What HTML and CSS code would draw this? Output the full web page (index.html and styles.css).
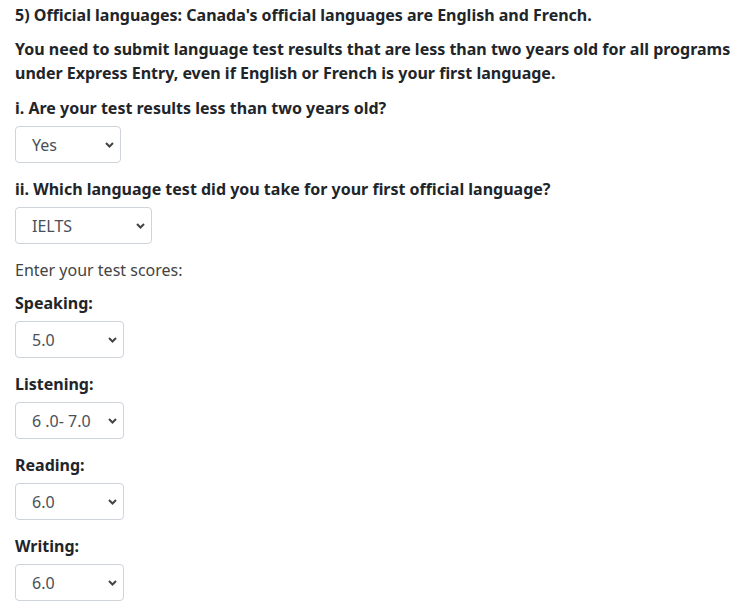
FILE: index.html
```html
<!DOCTYPE html>
<html lang="en">
<head>
    <meta charset="UTF-8">
    <meta name="viewport" content="width=device-width, initial-scale=1.0">
    <link rel="stylesheet" href="styles.css">
    <title>CRS Calculator - Official Languages</title>
</head>
<body>
    <div class="question-block">
        <p class="question-title">5) Official languages: Canada's official languages are English and French.</p>
        <p class="question-intro">You need to submit language test results that are less than two years old for all programs under Express Entry, even if English or French is your first language.</p>

        <label class="field-label" for="testAge">i. Are your test results less than two years old?</label>
        <select class="field-select select-yesno" id="testAge">
            <option>Yes</option>
            <option>No</option>
        </select>

        <label class="field-label" for="testType">ii. Which language test did you take for your first official language?</label>
        <select class="field-select select-test" id="testType">
            <option>IELTS</option>
            <option>CELPIP</option>
            <option>TEF Canada</option>
            <option>TCF Canada</option>
        </select>

        <p class="scores-note">Enter your test scores:</p>

        <label class="field-label" for="speaking">Speaking:</label>
        <select class="field-select select-score" id="speaking">
            <option>5.0</option>
            <option>5.5</option>
            <option>6.0</option>
        </select>

        <label class="field-label" for="listening">Listening:</label>
        <select class="field-select select-score" id="listening">
            <option>6 .0- 7.0</option>
            <option>7.5</option>
            <option>8.0</option>
        </select>

        <label class="field-label" for="reading">Reading:</label>
        <select class="field-select select-score" id="reading">
            <option>6.0</option>
            <option>6.5</option>
            <option>7.0</option>
        </select>

        <label class="field-label" for="writing">Writing:</label>
        <select class="field-select select-score" id="writing">
            <option>6.0</option>
            <option>6.5</option>
            <option>7.0</option>
        </select>
    </div>
</body>
</html>
```

FILE: styles.css
```css
body {
    font-family: "Noto Sans", Arial, sans-serif;
    font-size: 16px;
    line-height: 1.5;
    margin: 0;
    padding: 0;
    background-color: #fff;
    color: #212529;
}
.question-block {
    padding: 3px 15px 0;
}
.question-title {
    font-weight: bold;
    margin: 0 0 10px;
}
.question-intro {
    font-weight: bold;
    margin: 0 0 11px;
}
.field-label {
    display: block;
    font-weight: bold;
    margin-bottom: 6px;
}
.field-select {
    display: block;
    -webkit-appearance: none;
    appearance: none;
    height: 37px;
    margin: 0 0 14px;
    padding: 0 24px 0 16px;
    font-family: inherit;
    font-size: 16px;
    color: #495057;
    background-color: #fff;
    background-image: url("data:image/svg+xml,%3Csvg xmlns='http://www.w3.org/2000/svg' width='9' height='6' viewBox='0 0 9 6'%3E%3Cpath d='M1 1l3.5 3.5L8 1' fill='none' stroke='%23444' stroke-width='2'/%3E%3C/svg%3E");
    background-repeat: no-repeat;
    background-position: right 6px center;
    border: 1px solid #ced4da;
    border-radius: 4px;
}
.select-yesno {
    width: 106px;
}
.select-test {
    width: 137px;
}
.select-score {
    width: 109px;
}
.scores-note {
    color: #444;
    margin: 3px 0 9px;
}
```
